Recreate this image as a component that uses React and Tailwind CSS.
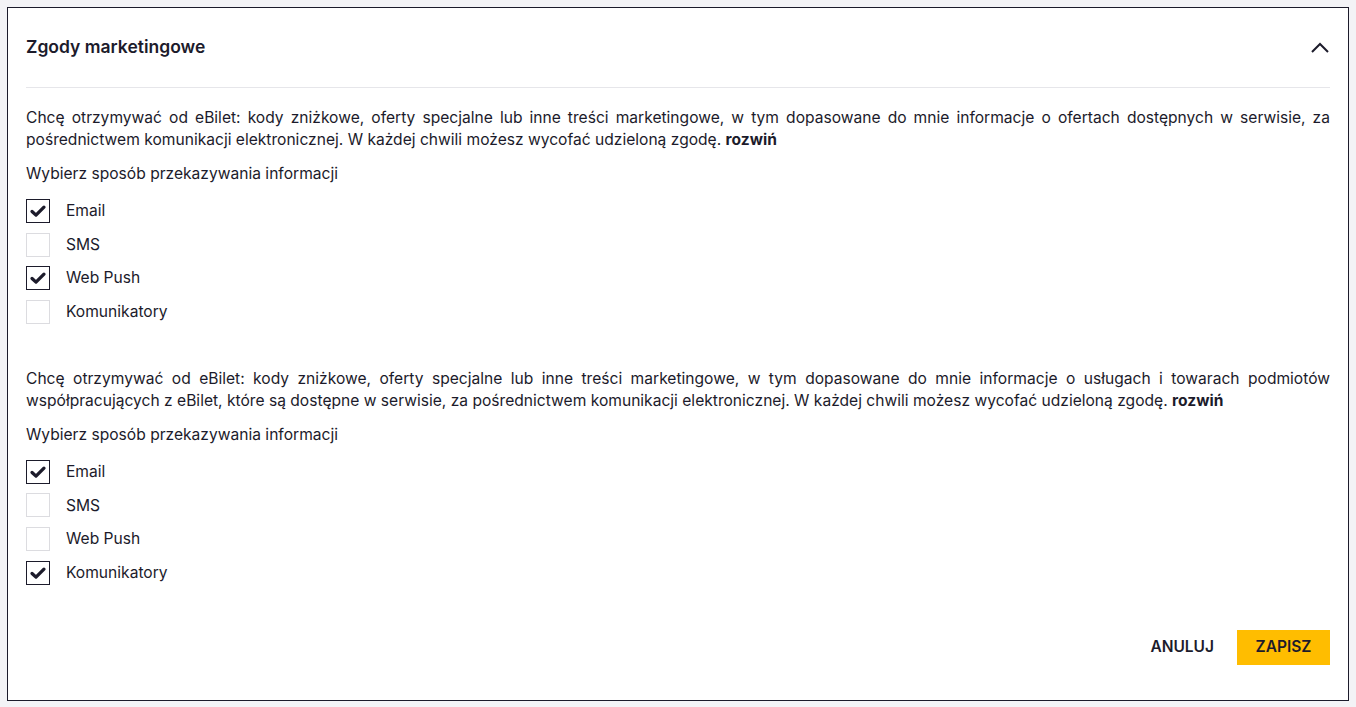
import React from "react";

const Box = ({ checked, label }) => (
  <div className="flex items-center h-6">
    <div
      className={
        "w-6 h-6 flex items-center justify-center border " +
        (checked ? "border-[#1c1b2b]" : "border-[#dcdce0]")
      }
    >
      {checked && (
        <svg width="24" height="24" viewBox="0 0 24 24">
          <path
            d="M5.5 12.5 L9.8 16.5 L18.5 7.8"
            fill="none"
            stroke="#1c1b2b"
            strokeWidth="3.6"
            strokeLinecap="round"
            strokeLinejoin="round"
          />
        </svg>
      )}
    </div>
    <span className="ml-4 text-[15.6px] text-[#1c1b2b]">{label}</span>
  </div>
);

const Section = ({ text, values }) => (
  <div>
    <p className="text-[15.6px] leading-[22px] text-[#1c1b2b] text-justify">
      {text} <strong className="font-bold">rozwiń</strong>
    </p>
    <p className="mt-3 text-[15.6px] leading-[22px] text-[#1c1b2b]">
      Wybierz sposób przekazywania informacji
    </p>
    <div className="mt-[14px] flex flex-col gap-[9.6px]">
      <Box checked={values[0]} label="Email" />
      <Box checked={values[1]} label="SMS" />
      <Box checked={values[2]} label="Web Push" />
      <Box checked={values[3]} label="Komunikatory" />
    </div>
  </div>
);

export default function App() {
  return (
    <div
      className="min-h-[707px] bg-[#f3f3f6] p-[7px]"
      style={{ fontFamily: "Inter, 'Noto Sans', sans-serif" }}
    >
      <div className="bg-white border border-[#1c1b2b] px-[18px] h-[694px]">
        <div className="h-[80px] flex items-center justify-between border-b border-[#e6e6ea]">
          <h2 className="text-[17.5px] font-semibold text-[#1c1b2b]">
            Zgody marketingowe
          </h2>
          <svg width="20" height="12" viewBox="0 0 20 12">
            <path
              d="M2 10 L10 2 L18 10"
              fill="none"
              stroke="#1c1b2b"
              strokeWidth="2"
            />
          </svg>
        </div>
        <div className="pt-[19px]">
          <Section
            text="Chcę otrzymywać od eBilet: kody zniżkowe, oferty specjalne lub inne treści marketingowe, w tym dopasowane do mnie informacje o ofertach dostępnych w serwisie, za pośrednictwem komunikacji elektronicznej. W każdej chwili możesz wycofać udzieloną zgodę."
            values={[true, false, true, false]}
          />
          <div className="h-[44px]" />
          <Section
            text="Chcę otrzymywać od eBilet: kody zniżkowe, oferty specjalne lub inne treści marketingowe, w tym dopasowane do mnie informacje o usługach i towarach podmiotów współpracujących z eBilet, które są dostępne w serwisie, za pośrednictwem komunikacji elektronicznej. W każdej chwili możesz wycofać udzieloną zgodę."
            values={[true, false, false, true]}
          />
          <div className="mt-[45px] flex justify-end items-center gap-[23px]">
            <button className="text-[15.5px] font-semibold text-[#1c1b2b] uppercase">
              Anuluj
            </button>
            <button className="h-[35px] w-[93px] bg-[#ffbd00] text-[15.5px] font-semibold text-[#1c1b2b] uppercase">
              Zapisz
            </button>
          </div>
        </div>
      </div>
    </div>
  );
}
